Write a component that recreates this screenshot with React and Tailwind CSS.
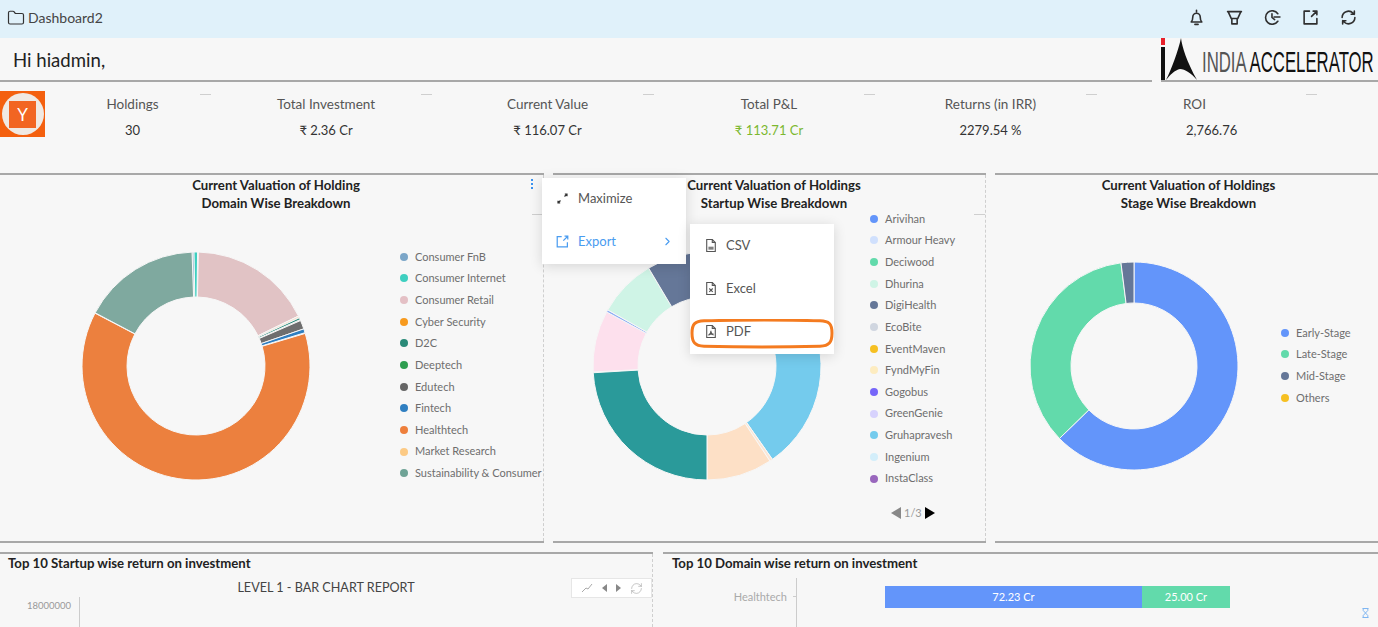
import { Folder, RefreshCw, ChevronRight } from 'lucide-react';

const FONT = 'font-["Lato","Liberation_Sans",sans-serif]';

function polar(cx, cy, r, deg) {
  const a = ((deg - 90) * Math.PI) / 180;
  return [cx + r * Math.cos(a), cy + r * Math.sin(a)];
}

function slicePath(cx, cy, R, r, a0, a1) {
  const [x0, y0] = polar(cx, cy, R, a0);
  const [x1, y1] = polar(cx, cy, R, a1);
  const [x2, y2] = polar(cx, cy, r, a1);
  const [x3, y3] = polar(cx, cy, r, a0);
  const big = a1 - a0 > 180 ? 1 : 0;
  return `M${x0} ${y0}A${R} ${R} 0 ${big} 1 ${x1} ${y1}L${x2} ${y2}A${r} ${r} 0 ${big} 0 ${x3} ${y3}Z`;
}

// slices are [startDeg, endDeg, colour], clockwise from 12 o'clock
function Donut({ size, R, r, slices, className }) {
  const c = size / 2;
  return (
    <svg width={size} height={size} viewBox={`0 0 ${size} ${size}`} className={className}>
      {slices.map(([a0, a1, fill], i) => (
        <path key={i} d={slicePath(c, c, R, r, a0, a1)} fill={fill} stroke="#f7f7f7" strokeWidth="1" />
      ))}
    </svg>
  );
}

function Legend({ items, className }) {
  return (
    <ul className={`flex flex-col ${className}`}>
      {items.map(([label, colour]) => (
        <li key={label} className="flex items-center h-[21.67px] text-[11px] text-[#6e6e6e] whitespace-nowrap">
          <span className="w-2 h-2 rounded-full mr-[7px] shrink-0" style={{ background: colour }} />
          {label}
        </li>
      ))}
    </ul>
  );
}

const domainLegend = [
  ['Consumer FnB', '#7ba6c8'],
  ['Consumer Internet', '#3ecfc0'],
  ['Consumer Retail', '#e4c0c5'],
  ['Cyber Security', '#f79a1e'],
  ['D2C', '#2a8a78'],
  ['Deeptech', '#2e9e50'],
  ['Edutech', '#666666'],
  ['Fintech', '#2f7fc1'],
  ['Healthtech', '#ee7f3c'],
  ['Market Research', '#fcca85'],
  ['Sustainability & Consumer', '#6fa396'],
];

const startupLegend = [
  ['Arivihan', '#6395fa'],
  ['Armour Heavy', '#d0e0fd'],
  ['Deciwood', '#62daab'],
  ['Dhurina', '#cff4e6'],
  ['DigiHealth', '#657798'],
  ['EcoBite', '#d0d6e0'],
  ['EventMaven', '#f6c022'],
  ['FyndMyFin', '#fdecc0'],
  ['Gogobus', '#7666f9'],
  ['GreenGenie', '#d7d2fd'],
  ['Gruhapravesh', '#74cbed'],
  ['Ingenium', '#d3eefa'],
  ['InstaClass', '#9967bd'],
];

const stageLegend = [
  ['Early-Stage', '#6395fa'],
  ['Late-Stage', '#62daab'],
  ['Mid-Stage', '#657798'],
  ['Others', '#f6c022'],
];

const domainSlices = [
  [358, 359, '#7ba6c8'],
  [359, 360.8, '#3ecfc0'],
  [1.2, 64, '#e1c3c5'],
  [64, 65, '#f7e3cf'],
  [65, 66, '#2a8a78'],
  [66.5, 71, '#6e6e6e'],
  [71, 73, '#2f7fc1'],
  [73.4, 297.6, '#ec803e'],
  [297.8, 358, '#7fa99f'],
];

const startupSlices = [
  [0, 55, '#6395fa'],
  [55, 145, '#74cbed'],
  [145, 146.5, '#fbe6d5'],
  [146.5, 180, '#fde0c6'],
  [180, 266.6, '#2a9a9a'],
  [267, 298.3, '#fde0ed'],
  [298.3, 299.5, '#8fb0f5'],
  [299.5, 329.2, '#cff4e6'],
  [329.2, 360, '#657798'],
];

const stageSlices = [
  [0, 225.8, '#6395fa'],
  [225.8, 352.8, '#62daab'],
  [352.8, 360, '#657798'],
];

const stats = [
  ['Holdings', '30'],
  ['Total Investment', '₹ 2.36 Cr'],
  ['Current Value', '₹ 116.07 Cr'],
  ['Total P&L', '₹ 113.71 Cr', 'text-[#7cb82f]'],
  ['Returns (in IRR)', '2279.54 %'],
];

function Dash({ className }) {
  return <span className={`absolute h-px w-[11px] bg-[#cfcfcf] ${className}`} />;
}

function StatCol({ label, value, valueClass = 'text-[#333]' }) {
  return (
    <div className="relative flex flex-col items-center pl-[9px]">
      <span className="text-[13.5px] leading-5 text-[#555]">{label}</span>
      <span className={`text-[13px] leading-5 mt-[6px] ${valueClass}`}>{value}</span>
      <Dash className="right-0 top-0" />
    </div>
  );
}

function HeaderIcon({ children }) {
  return (
    <svg width="17" height="17" viewBox="0 0 16 16" fill="none" stroke="#2f2f2f" strokeWidth="1.500" strokeLinecap="round" strokeLinejoin="round">
      {children}
    </svg>
  );
}

function YcLogo() {
  return (
    <div className="w-[45px] h-[46px] bg-[#f4600f] flex items-center justify-center shrink-0">
      <div className="w-[42px] h-[42px] rounded-full bg-[#f0e9e3] flex items-center justify-center">
        <div className="w-[27px] h-[27px] bg-[#f26522] flex items-center justify-center text-white text-[17px] leading-none">Y</div>
      </div>
    </div>
  );
}

function IaLogo() {
  return (
    <div className="flex items-end w-[217px] h-[44px] border-b-2 border-[#a8a8a8] overflow-hidden shrink-0">
      <svg width="37" height="42" viewBox="0 0 37 42" className="shrink-0">
        <rect x="0" y="0" width="4" height="7" fill="#e8202a" />
        <rect x="0" y="9" width="4" height="33" fill="#111" />
        <path d="M20 0 C21 9 26 24 36 42 C30 35 24 31 19 31 C14 32 9 37 5 42 C10 32 17 14 20 0 Z" fill="#111" />
      </svg>
      <span className="block w-[175px] ml-[4px] mb-[2px] font-['Liberation_Sans',sans-serif] text-[29px] leading-[32px] whitespace-nowrap origin-left scale-x-[0.578] text-[#555]">
        INDIA <span className="text-[#111]">ACCELERATOR</span>
      </span>
    </div>
  );
}

function ChartTitle({ children, className }) {
  return <h3 className={`text-center text-[13.2px] leading-[18px] font-bold text-[#222] ${className}`}>{children}</h3>;
}

function FileIcon({ label }) {
  return (
    <svg width="12" height="15" viewBox="0 0 14 16" fill="none" stroke="#555" strokeWidth="1.300" className="shrink-0">
      <path d="M2 1h6.500L12 4.500V15H2z" />
      <path d="M8.500 1v3.500H12" />
      {label === 'x' && <path d="M5 8l4 4M9 8l-4 4" />}
      {label === 'csv' && <path d="M4 10h6M4 12h6" />}
      {label === 'pdf' && <path d="M7 7c0 3-2 5-3 5.500M7 9c1 2 2 3 3 3M5 11h5" />}
    </svg>
  );
}

function ActionMenus() {
  return (
    <>
      <div className="absolute left-[542px] top-[5px] w-[144px] h-[86px] bg-white shadow-[0_2px_12px_rgba(0,0,0,0.14)] flex flex-col z-10 text-[13px]">
        <div className="flex items-center h-[41px] pl-[15px] gap-[10px] text-[#555]">
          <svg width="11" height="11" viewBox="0 0 11 11" fill="none" stroke="#333" strokeWidth="1.200" className="shrink-0">
            <path d="M1 10l2.500-2.500M7.500 3.500L10 1M1 7.800v2.200h2.200M7.800 1H10v2.200" />
          </svg>
          Maximize
        </div>
        <div className="flex items-center h-[45px] pl-[14px] gap-[9px] text-[#4a9cf0]">
          <svg width="13" height="13" viewBox="0 0 16 16" fill="none" stroke="#4a9cf0" strokeWidth="1.500" className="shrink-0">
            <path d="M7 2H1.500v12.500H14V9M9 7l5.500-5.500M10.500 1.500h4v4" />
          </svg>
          Export
          <ChevronRight size={13} strokeWidth={2} className="ml-auto mr-[12px]" />
        </div>
      </div>
      <div className="absolute left-[690px] top-[51px] w-[144px] h-[130px] bg-white shadow-[0_2px_12px_rgba(0,0,0,0.14)] flex flex-col z-10 text-[13px] text-[#555]">
        <div className="flex items-center h-[43px] pl-[15px] gap-[9px]"><FileIcon label="csv" />CSV</div>
        <div className="flex items-center h-[43px] pl-[15px] gap-[9px]"><FileIcon label="x" />Excel</div>
        <div className="flex items-center h-[43px] pl-[15px] gap-[9px]"><FileIcon label="pdf" />PDF</div>
        <svg width="144" height="30" viewBox="0 0 144 30" fill="none" className="absolute left-0 top-[95px]">
          <path d="M14 1.800C50 1 100 1 130 1.800c9 .2 12 3 12 12.200 0 9.500-3 13-12 13.200-38 1-78 1-116 0C5 27 2 23.500 2 14 2 5 5 2 14 1.800z" stroke="#f47b20" strokeWidth="3" />
        </svg>
      </div>
    </>
  );
}

function Card({ className, dashed, children }) {
  return (
    <div className={`flex flex-col border-t-2 border-[#a8a8a8] ${className}`}>
      <div className={`relative flex-1 pt-px ${dashed ? 'border-r border-dashed border-[#cfcfcf]' : ''}`}>{children}</div>
    </div>
  );
}

export default function App() {
  return (
    <div className={`h-[627px] w-[1378px] overflow-hidden bg-[#f7f7f7] ${FONT}`}>
      <header className="h-[38px] bg-[#e0f1fa] flex items-center pl-[7px] pr-[21px] pb-[3px] text-[#444]">
        <Folder size={18} strokeWidth={1.6} className="text-[#333]" />
        <span className="ml-[3px] text-[14px]">Dashboard2</span>
        <div className="ml-auto flex items-center gap-[21px]">
          <HeaderIcon>
            <path d="M8 1.200v1.300M3 12.200c1-1 1.500-2.200 1.500-4.700a3.500 3.500 0 0 1 7 0c0 2.500.5 3.700 1.500 4.700zM6.500 14.500h3" />
          </HeaderIcon>
          <HeaderIcon>
            <path d="M1.500 2.500h13M2 2.500l3 6.500h6l3-6.500M5.500 9v5h5V9" />
          </HeaderIcon>
          <HeaderIcon>
            <path d="M13 4.500A6.300 6.300 0 1 0 13 11.500M7.500 4.500V8l2.500 2M9.500 7.500h5.500" />
          </HeaderIcon>
          <HeaderIcon>
            <path d="M7 2H2v12h12V9M9 7l5-5M10.500 2H14v3.500" />
          </HeaderIcon>
          <HeaderIcon>
            <path d="M2 8a6 6 0 0 1 10.200-4.200L13.500 5M14 8a6 6 0 0 1-10.200 4.200L2.500 11M13.500 2v3h-3M2.500 14v-3h3" />
          </HeaderIcon>
        </div>
      </header>

      <div className="h-[44px] flex items-end">
        <div className="w-[1152px] h-[44px] border-b-2 border-[#a8a8a8] flex items-center pl-[13px] pt-[3px] text-[18.6px] text-[#222]">
          Hi hiadmin,
        </div>
        <div className="ml-[9px]"><IaLogo /></div>
      </div>

      <section className="h-[91px] flex items-start pt-[9px]">
        <YcLogo />
        <div className="flex-1 grid grid-cols-[166px_221px_222px_221px_222px_220px] pt-[3px] pr-[61px]">
          {stats.map(([label, value, cls]) => (
            <StatCol key={label} label={label} value={value} valueClass={cls} />
          ))}
          <div className="relative flex flex-col items-start pl-[86px]">
            <span className="text-[13.5px] leading-5 text-[#555]">ROI</span>
            <span className="text-[13px] leading-5 mt-[6px] ml-[3px] text-[#333]">2,766.76</span>
            <Dash className="right-0 top-0" />
          </div>
        </div>
      </section>

      <section className="relative h-[368px] flex gap-[9px]">
        <Card className="w-[544px]" dashed>
          <ChartTitle className="pl-[9px]">Current Valuation of Holding<br />Domain Wise Breakdown</ChartTitle>
          <span className="absolute left-[531px] top-[4px] flex flex-col gap-[2px]">
            <i className="w-[2px] h-[2px] bg-[#3b93f0]" /><i className="w-[2px] h-[2px] bg-[#3b93f0]" /><i className="w-[2px] h-[2px] bg-[#3b93f0]" />
          </span>
          <Dash className="right-0 top-[39px]" />
          <div className="flex mt-[14px]">
            <Donut size={232} R={114} r={69} slices={domainSlices} className="ml-[80px] mt-[24px] shrink-0" />
            <Legend items={domainLegend} className="ml-[88px] mt-[20px]" />
          </div>
        </Card>
        <Card className="w-[433px]" dashed>
          <ChartTitle className="pl-[10px]">Current Valuation of Holdings<br />Startup Wise Breakdown</ChartTitle>
          <Dash className="right-0 top-[39px]" />
          <div className="flex">
            <Donut size={232} R={114} r={69} slices={startupSlices} className="ml-[38px] mt-[38px] shrink-0" />
            <div className="ml-[47px] flex flex-col items-start">
              <Legend items={startupLegend} className="mt-[-4px]" />
              <div className="ml-[21px] mt-[17px] flex items-center gap-[3px] text-[11px] leading-none text-[#999]">
                <span className="w-0 h-0 border-y-[6px] border-y-transparent border-r-[10px] border-r-[#888]" />
                1/3
                <span className="w-0 h-0 border-y-[6px] border-y-transparent border-l-[10px] border-l-black" />
              </div>
            </div>
          </div>
        </Card>
        <Card className="flex-1">
          <ChartTitle className="pl-[4px]">Current Valuation of Holdings<br />Stage Wise Breakdown</ChartTitle>
          <div className="flex">
            <Donut size={212} R={104} r={63} slices={stageSlices} className="ml-[33px] mt-[48px] shrink-0" />
            <Legend items={stageLegend} className="ml-[41px] mt-[110px]" />
          </div>
        </Card>
        <ActionMenus />
      </section>

      <div className="flex h-[11px]">
        <div className="w-[544px] border-t-2 border-[#a8a8a8]" />
        <div className="ml-[9px] w-[433px] border-t-2 border-[#a8a8a8]" />
        <div className="ml-[9px] flex-1 border-t-2 border-[#a8a8a8]" />
      </div>

      <section className="flex gap-[10px] h-[75px]">
        <Card className="w-[653px]" dashed>
          <h3 className="pl-[8px] -mt-px text-[13.2px] leading-[18px] font-bold text-[#222]">Top 10 Startup wise return on investment</h3>
          <p className="text-center mt-[7px] text-[12.6px] leading-[18px] text-[#444]">LEVEL 1 - BAR CHART REPORT</p>
          <div className="absolute right-0 top-[24px] w-[81px] h-[20px] bg-white border border-[#e6e6e6] flex items-center justify-around px-1 text-[#999]">
            <svg width="12" height="10" viewBox="0 0 12 10" fill="none" stroke="#aaa"><path d="M1 9l4-4 2 1 4-5" /></svg>
            <span className="w-0 h-0 border-y-[4px] border-y-transparent border-r-[5px] border-r-[#888]" />
            <span className="w-0 h-0 border-y-[4px] border-y-transparent border-l-[5px] border-l-[#888]" />
            <RefreshCw size={13} strokeWidth={1} />
          </div>
          <div className="flex">
            <div className="w-[71px] flex justify-end pt-[3px]">
              <span className="text-[9.5px] leading-[12px] text-[#999]">18000000</span>
            </div>
            <span className="ml-[8px] w-px h-[40px] bg-[#ccc]" />
          </div>
        </Card>
        <Card className="flex-1">
          <h3 className="pl-[9px] -mt-px text-[13.2px] leading-[18px] font-bold text-[#222]">Top 10 Domain wise return on investment</h3>
          <div className="flex mt-[6px] h-[50px]">
            <span className="w-[124px] mt-[12px] text-right text-[11px] leading-[14px] text-[#aaa]">Healthtech</span>
            <span className="ml-[6px] mt-[18px] w-[3px] h-px bg-[#ccc]" />
            <span className="w-px h-full bg-[#ccc]" />
            <div className="ml-[88px] mt-[8px] flex h-[22px] text-[11px] text-white">
              <div className="w-[257px] bg-[#6395fa] flex items-center justify-center">72.23 Cr</div>
              <div className="w-[88px] bg-[#62daab] flex items-center justify-center">25.00 Cr</div>
            </div>
          </div>
          <svg width="7" height="10" viewBox="0 0 7 10" fill="none" stroke="#7fb6f2" className="absolute right-[9px] top-[54px]">
            <path d="M0.500 0.500h6M0.500 9.500h6M1.200 0.500v2L3.500 5 1.200 7.500v2M5.800 0.500v2L3.500 5l2.300 2.500v2" />
          </svg>
        </Card>
      </section>
    </div>
  );
}
